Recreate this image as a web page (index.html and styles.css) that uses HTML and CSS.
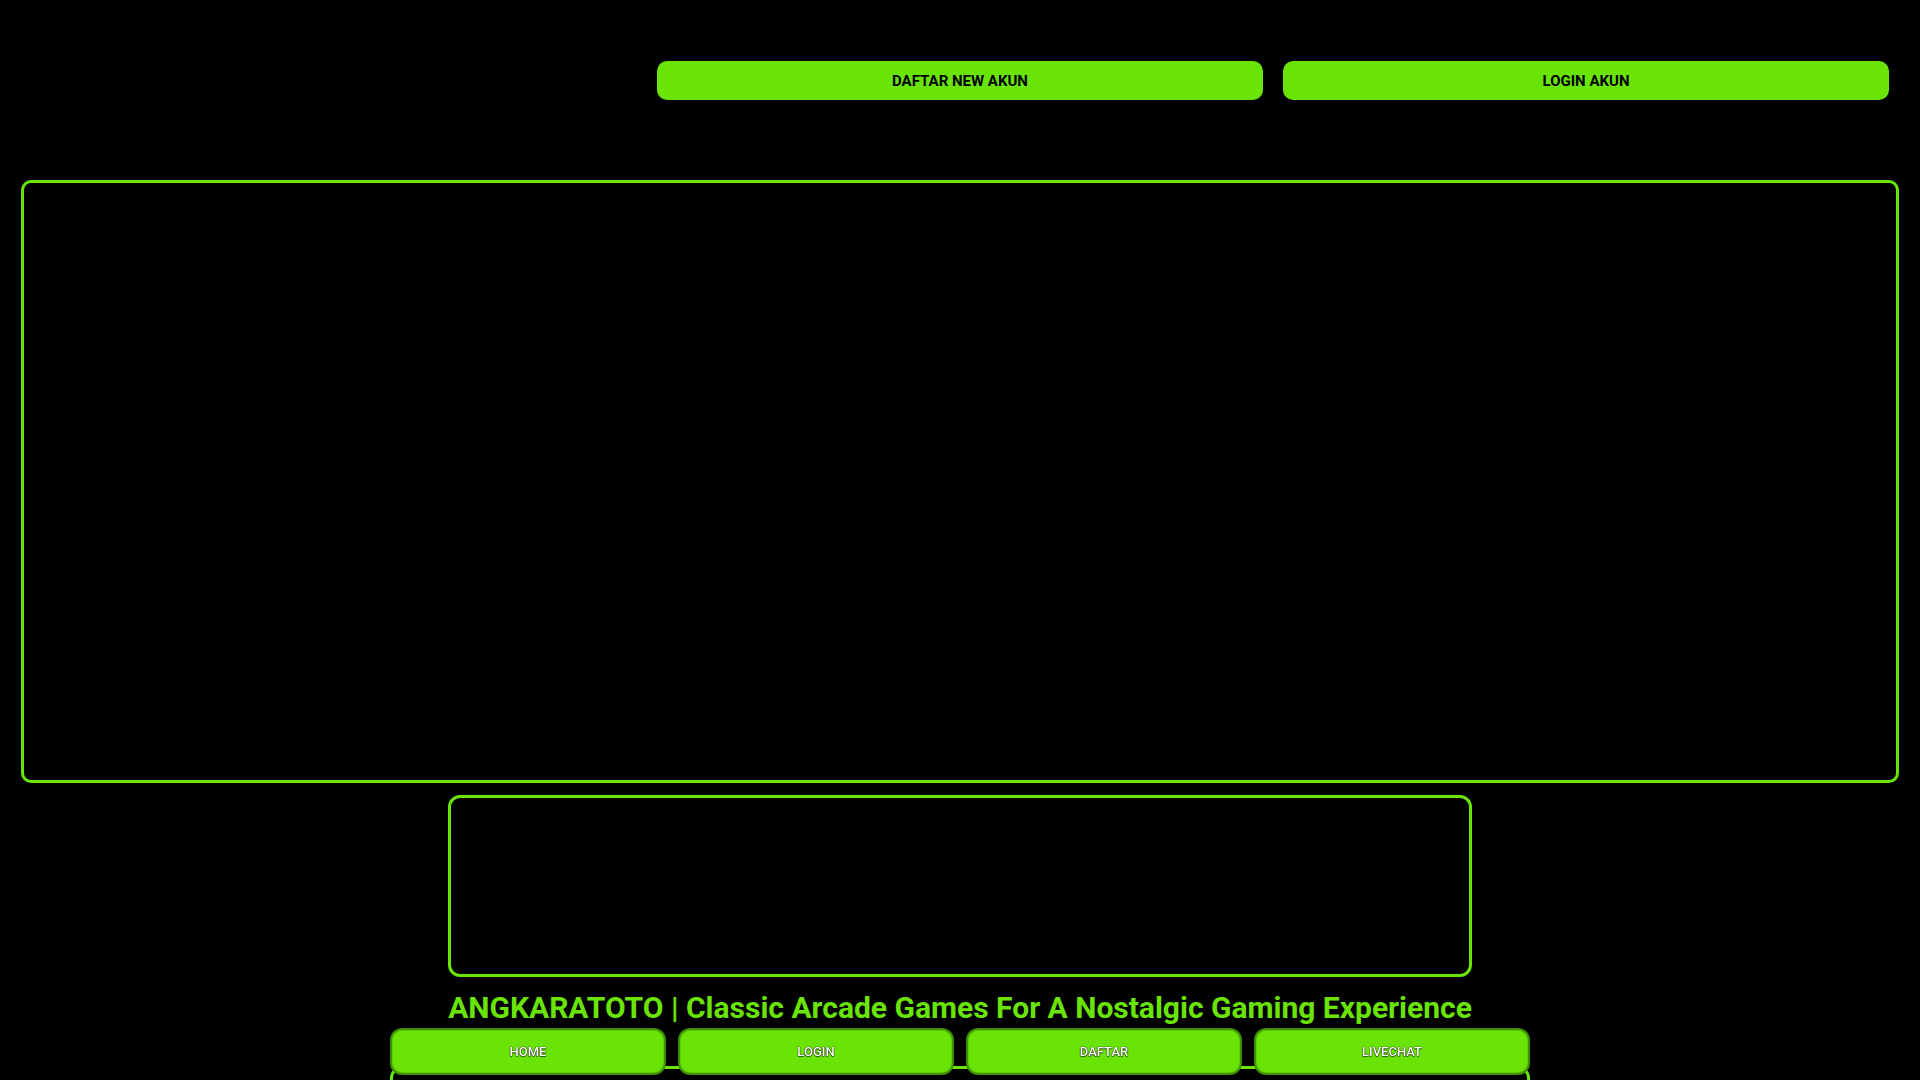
FILE: index.html
```html
<!DOCTYPE html>
<html lang="id">
<head>
<meta charset="utf-8">
<title>ANGKARATOTO</title>
<link rel="stylesheet" href="styles.css">
</head>
<body>
<div class="page">
  <header class="header">
    <div class="logo"></div>
    <a class="top-btn" href="#">DAFTAR NEW AKUN</a>
    <a class="top-btn" href="#">LOGIN AKUN</a>
  </header>
  <div class="banner"></div>
  <div class="box2"></div>
  <h1 class="title">ANGKARATOTO | Classic Arcade Games For A Nostalgic Gaming Experience</h1>
  <div class="box3"></div>
</div>
<nav class="bottom-nav">
  <a class="nav-btn" href="#">HOME</a>
  <a class="nav-btn" href="#">LOGIN</a>
  <a class="nav-btn" href="#">DAFTAR</a>
  <a class="nav-btn" href="#">LIVECHAT</a>
</nav>
</body>
</html>
```
FILE: styles.css
```css
html, body {
  margin: 0;
  padding: 0;
  background: #000;
  font-family: Roboto, "Liberation Sans", Arial, sans-serif;
}
.page {
  padding: 0 21px;
}
.header {
  display: grid;
  grid-template-columns: 1fr 1fr 1fr;
  padding-top: 61px;
  height: 120px;
  box-sizing: border-box;
}
.top-btn {
  margin: 0 10px;
  height: 39px;
  display: flex;
  align-items: center;
  justify-content: center;
  background: #6ae406;
  color: #000;
  font-weight: 700;
  font-size: 15px;
  text-decoration: none;
  border-radius: 10px;
}
.banner {
  margin-top: 60px;
  height: 603px;
  border: 3px solid #6ae406;
  border-radius: 10px;
  box-sizing: border-box;
}
.box2 {
  width: 1024px;
  height: 182px;
  margin: 12px auto 0;
  border: 3px solid #6ae406;
  border-radius: 12px;
  box-sizing: border-box;
}
.title {
  margin: 10px 0 0;
  text-align: center;
  color: #6ae406;
  font-weight: 700;
  font-size: 30px;
  line-height: 42px;
}
.box3 {
  width: 1140px;
  height: 300px;
  margin: 37px auto 0;
  border: 3px solid #6ae406;
  border-radius: 12px;
  box-sizing: border-box;
}
.bottom-nav {
  position: fixed;
  bottom: 5px;
  left: 50%;
  transform: translateX(-50%);
  width: 1140px;
  display: grid;
  grid-template-columns: repeat(4, 1fr);
  gap: 12px;
}
.nav-btn {
  height: 47px;
  box-sizing: border-box;
  display: flex;
  align-items: center;
  justify-content: center;
  background: #6ae406;
  border: 2px solid #3f8f00;
  box-shadow: inset 0 0 0 1px #5fcf04;
  border-radius: 12px;
  color: #fff;
  font-size: 13px;
  font-weight: 500;
  text-decoration: none;
  text-shadow: 0 0 1px #000, 0 0 1px #000, 0 1px 1px rgba(0, 0, 0, 0.5);
}
```
